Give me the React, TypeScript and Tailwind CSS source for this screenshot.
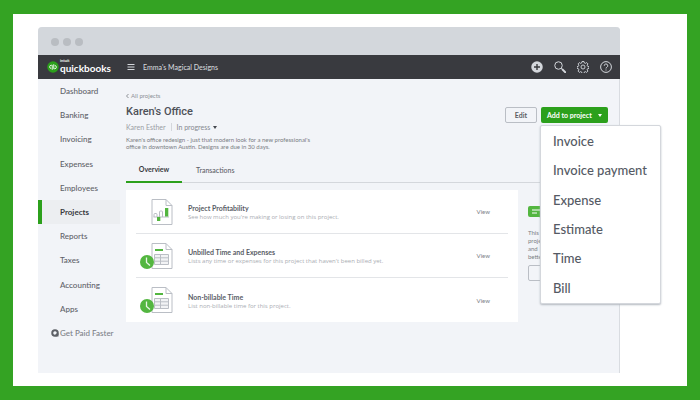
import { clsx } from 'clsx';

const NAV_ITEMS = [
  'Dashboard',
  'Banking',
  'Invoicing',
  'Expenses',
  'Employees',
  'Projects',
  'Reports',
  'Taxes',
  'Accounting',
  'Apps',
];

const MENU_ITEMS = ['Invoice', 'Invoice payment', 'Expense', 'Estimate', 'Time', 'Bill'];

const REPORTS = [
  {
    id: 1,
    title: 'Project Profitability',
    text: "See how much you're making or losing on this project.",
    icon: 'chart',
  },
  {
    id: 2,
    title: 'Unbilled Time and Expenses',
    text: "Lists any time or expenses for this project that haven't been billed yet.",
    icon: 'time',
  },
  {
    id: 3,
    title: 'Non-billable Time',
    text: 'List non-billable time for this project.',
    icon: 'time',
  },
];

function Logo() {
  return (
    <div className="flex items-center">
      <svg className="size-3" viewBox="0 0 24 24" aria-hidden="true">
        <circle cx="12" cy="12" r="11.5" fill="#2ca01c" />
        <g fill="none" stroke="#e4f5e1" strokeWidth="2">
          <path d="M10.5 17.5V8.5H8.5a3.2 3.2 0 0 0 0 6.5" />
          <path d="M13.5 6.5V15.5h2a3.2 3.2 0 0 0 0-6.5" />
        </g>
      </svg>
      <div className="ml-px flex flex-col font-bold text-white">
        <span className="text-[4px] leading-[5px]">intuit</span>
        <span className="pb-1 text-[10px] leading-[10px]">quickbooks</span>
      </div>
    </div>
  );
}

function HeaderIcons() {
  return (
    <div className="ml-auto flex items-center gap-[11px] pr-2 text-[#d4d7dc]">
      <button aria-label="Create">
        <svg className="size-3" viewBox="0 0 24 24">
          <circle cx="12" cy="12" r="11.5" fill="currentColor" />
          <path d="M12 6v12M6 12h12" stroke="#393a3d" strokeWidth="2.8" />
        </svg>
      </button>
      <button aria-label="Search">
        <svg className="size-3" viewBox="0 0 24 24" fill="none" stroke="currentColor">
          <circle cx="9" cy="9" r="7.5" strokeWidth="2" />
          <path d="M14.5 14.5L17 17" strokeWidth="2" />
          <path d="M17 17l5.5 5.5" strokeWidth="3.6" strokeLinecap="round" />
        </svg>
      </button>
      <button aria-label="Settings">
        <svg className="size-3" viewBox="0 0 24 24" fill="none" stroke="currentColor" strokeWidth="1.8">
          <path d="M10 1h4l.7 3 2 .8 2.7-1.6 2.5 2.6-1.6 2.7.8 2 2.9.7v3.6l-2.900.7-.8 2 1.6 2.7-2.5 2.6-2.7-1.6-2 .8-.7 3h-4l-.7-3-2-.8-2.7 1.6-2.5-2.6 1.6-2.7-.8-2-2.9-.7v-3.6l2.9-.7.8-2-1.6-2.7 2.5-2.6 2.7 1.6 2-.8z" />
          <circle cx="12" cy="12" r="4" />
        </svg>
      </button>
      <button aria-label="Help">
        <svg className="size-3" viewBox="0 0 24 24" fill="none" stroke="currentColor" strokeWidth="2">
          <circle cx="12" cy="12" r="10.8" />
          <path d="M8.5 9.5a3.5 3.5 0 1 1 5.2 3c-1.200.7-1.7 1.2-1.7 2.5M12 17v2" />
        </svg>
      </button>
    </div>
  );
}

function ReportIcon({ kind }: { kind: string }) {
  return (
    <svg className="h-7 w-[34px]" viewBox="0 0 34 28" fill="none" aria-hidden="true">
      <path d="M12 1.5h14l6 6V26.500H12z" fill="#fff" stroke="#babec5" strokeLinejoin="round" />
      <path d="M26 1.5v6h6" stroke="#babec5" strokeLinejoin="round" />
      {kind === 'chart' ? (
        <>
          <path d="M13.5 19h15.5" stroke="#babec5" />
          <path
            d="M14 19v-2.500a1 1 0 0 1 1-1h1a1 1 0 0 1 1 1V19M19.500 19v-5a1 1 0 0 1 1-1h1a1 1 0 0 1 1 1v5"
            stroke="#babec5"
          />
          <path d="M25 10h3.300v8.500H25zM17 19h3.300v4H17z" fill="#53b640" />
        </>
      ) : (
        <>
          <path d="M15 7h8v2h-8z" fill="#53b640" />
          <path
            d="M14.500 12.500h14v10h-14zM14.500 15.800h14M14.500 19.200h14M20.500 12.500v10"
            fill="#f2f3f5"
            stroke="#babec5"
          />
          <circle cx="7" cy="20" r="7" fill="#53b640" />
          <path d="M6.500 15.500v5l3.500 3" stroke="#e8f6e5" strokeWidth="1.300" />
        </>
      )}
    </svg>
  );
}

function Sidebar() {
  return (
    <nav className="flex w-[82px] shrink-0 flex-col pb-7 text-[8px] font-medium text-[#5f6269]">
      {NAV_ITEMS.map((item) => (
        <a
          key={item}
          href="#"
          className={clsx(
            'flex flex-1 items-center border-l-4 pl-[18px]',
            item === 'Projects' ? 'border-[#2ca01c] bg-[#eceef1] font-bold text-[#393a3f]' : 'border-transparent',
          )}
        >
          {item}
        </a>
      ))}
      <a href="#" className="flex flex-1 items-center gap-px pl-[13px] whitespace-nowrap text-[#7d8188]">
        <svg className="size-2 shrink-0" viewBox="0 0 16 16" aria-hidden="true">
          <circle cx="8" cy="8" r="5.5" fill="none" stroke="#5d6066" strokeWidth="4" />
          <path d="M9 9h6v6H9z" fill="#5d6066" />
          <circle cx="8" cy="8" r="2.5" fill="#f2f4f8" />
        </svg>
        Get Paid Faster
      </a>
    </nav>
  );
}

function ProjectActions() {
  return (
    <div className="relative mt-4 flex h-4 shrink-0 gap-1 text-[7px] font-bold">
      <button className="w-8 rounded-xs border border-[#babec5] text-[#5a5d64]">Edit</button>
      <button className="flex w-[67px] items-center justify-between rounded-xs bg-[#2ca01c] px-[6px] whitespace-nowrap text-white">
        Add to project
        <svg className="h-[3px] w-1" viewBox="0 0 4 3" aria-hidden="true">
          <path d="M0 0h4L2 3z" fill="currentColor" />
        </svg>
      </button>
      {/* Open menu */}
      <ul className="absolute top-[18px] left-[35px] z-10 flex h-[179px] w-[121px] flex-col rounded-xs border border-[#d4d7dc] bg-white pt-px text-[13px] font-medium text-[#555a64] shadow-[0_1px_2px_#b4b9c0]">
        {MENU_ITEMS.map((item) => (
          <li key={item} className="flex flex-1">
            <button className="flex-1 pl-3 text-left whitespace-nowrap">{item}</button>
          </li>
        ))}
      </ul>
    </div>
  );
}

export default function App() {
  return (
    <div className="flex min-h-screen flex-col border-x-[13px] border-y-[14px] border-[#34a323] bg-white py-[13px] pr-[67px] pl-[25px] font-['Lato','Liberation_Sans',sans-serif]">
      <div className="flex flex-1 flex-col rounded-t-[4px] border-r border-[#d9dce1] bg-[#f2f4f8]">
        {/* Browser chrome */}
        <div className="-mr-px flex h-7 items-center gap-1 rounded-t-[4px] bg-[#d3d7dc] pt-[2px] pl-[13px]">
          <span className="size-2 rounded-full bg-[#b9bdc2]" />
          <span className="size-2 rounded-full bg-[#b9bdc2]" />
          <span className="size-2 rounded-full bg-[#b9bdc2]" />
        </div>

        <header className="-mr-px flex h-6 items-center bg-[#393a3f] pl-[9px]">
          <div className="w-20">
            <Logo />
          </div>
          <button aria-label="Menu" className="mr-2 text-[#d4d7dc]">
            <svg className="size-2" viewBox="0 0 8 8" stroke="currentColor">
              <path d="M0.5 1.5h7M0.5 4h7M0.5 6.5h7" />
            </svg>
          </button>
          <span className="text-[7px] font-medium text-[#d4d7dc]">Emma's Magical Designs</span>
          <HeaderIcons />
        </header>

        <div className="flex flex-1">
          <Sidebar />

          <main className="min-w-0 flex-1 pt-3 pr-[11px] pl-[6px]">
            <div className="flex justify-between">
              <div className="whitespace-nowrap">
                <a href="#" className="flex items-center gap-[2px] text-[6px] leading-[10px] text-[#8d9096]">
                  <svg className="h-1 w-[3px]" viewBox="0 0 3 4" fill="none" stroke="currentColor">
                    <path d="M2.5 0L0.5 2l2 2" />
                  </svg>
                  All projects
                </a>
                <h1 className="mt-1 font-['Roboto',sans-serif] text-[11px] leading-[14px] font-medium text-[#4e5158]">
                  Karen's Office
                </h1>
                <div className="mt-1 flex items-center text-[7px] leading-[8px] text-[#9a9da4]">
                  <span className="border-r border-[#d4d7dc] pr-[5px]">Karen Esther</span>
                  <button className="flex items-center gap-[3px] pl-[5px] text-[#85888f]">
                    In progress
                    <svg className="h-[3px] w-1" viewBox="0 0 4 3">
                      <path d="M0 0h4L2 3z" fill="#44474e" />
                    </svg>
                  </button>
                </div>
                <p className="mt-[5px] text-[6px] leading-[7px] text-[#7a7d84]">
                  Karen's office redesign - just that modern look for a new professional's
                  <br />
                  office in downtown Austin. Designs are due in 30 days.
                </p>
              </div>
              <ProjectActions />
            </div>

            {/* Tabs */}
            <div className="mt-2 flex h-[25px] border-b border-[#d4d7dc] text-[7px] text-[#5f6269]">
              <button className="-mb-px w-14 border-b-2 border-[#2ca01c] font-bold text-[#393a3f]">Overview</button>
              <button className="px-[14px] font-medium">Transactions</button>
            </div>

            <div className="mt-[7px] flex">
              <section className="min-w-0 flex-1 bg-white px-[10px]">
                {REPORTS.map((report) => (
                  <div
                    key={report.id}
                    className="flex h-11 items-center border-b border-[#e3e5e8] pr-[18px] pl-1 last:border-b-0"
                  >
                    <ReportIcon kind={report.icon} />
                    <div className="ml-[14px] flex-1 pt-[2px] whitespace-nowrap">
                      <h2 className="text-[7px] leading-[10px] font-bold text-[#5a5d66]">{report.title}</h2>
                      <p className="font-['Open_Sans',sans-serif] text-[6px] leading-[9px] text-[#aaadb3]">
                        {report.text}
                      </p>
                    </div>
                    <a href="#" className="text-[6px] font-medium text-[#85888f]">
                      View
                    </a>
                  </div>
                ))}
              </section>

              {/* Tip panel, partly under the open menu */}
              <aside className="ml-[10px] w-20 shrink-0 pt-4 text-[6px] leading-[8px] text-[#7a7d84]">
                <svg className="h-[13px] w-4" viewBox="0 0 16 13" aria-hidden="true">
                  <path d="M2 0h14v13l-5-2H2a2 2 0 0 1-2-2V2a2 2 0 0 1 2-2z" fill="#53b640" />
                  <path d="M4 4h8M4 7h5" stroke="#fff" />
                </svg>
                <p className="mt-[10px]">
                  This
                  <br />
                  project
                  <br />
                  and
                  <br />
                  better
                </p>
                <div className="mt-1 h-4 rounded-xs border border-[#babec5]" />
              </aside>
            </div>
          </main>
        </div>
      </div>
    </div>
  );
}
